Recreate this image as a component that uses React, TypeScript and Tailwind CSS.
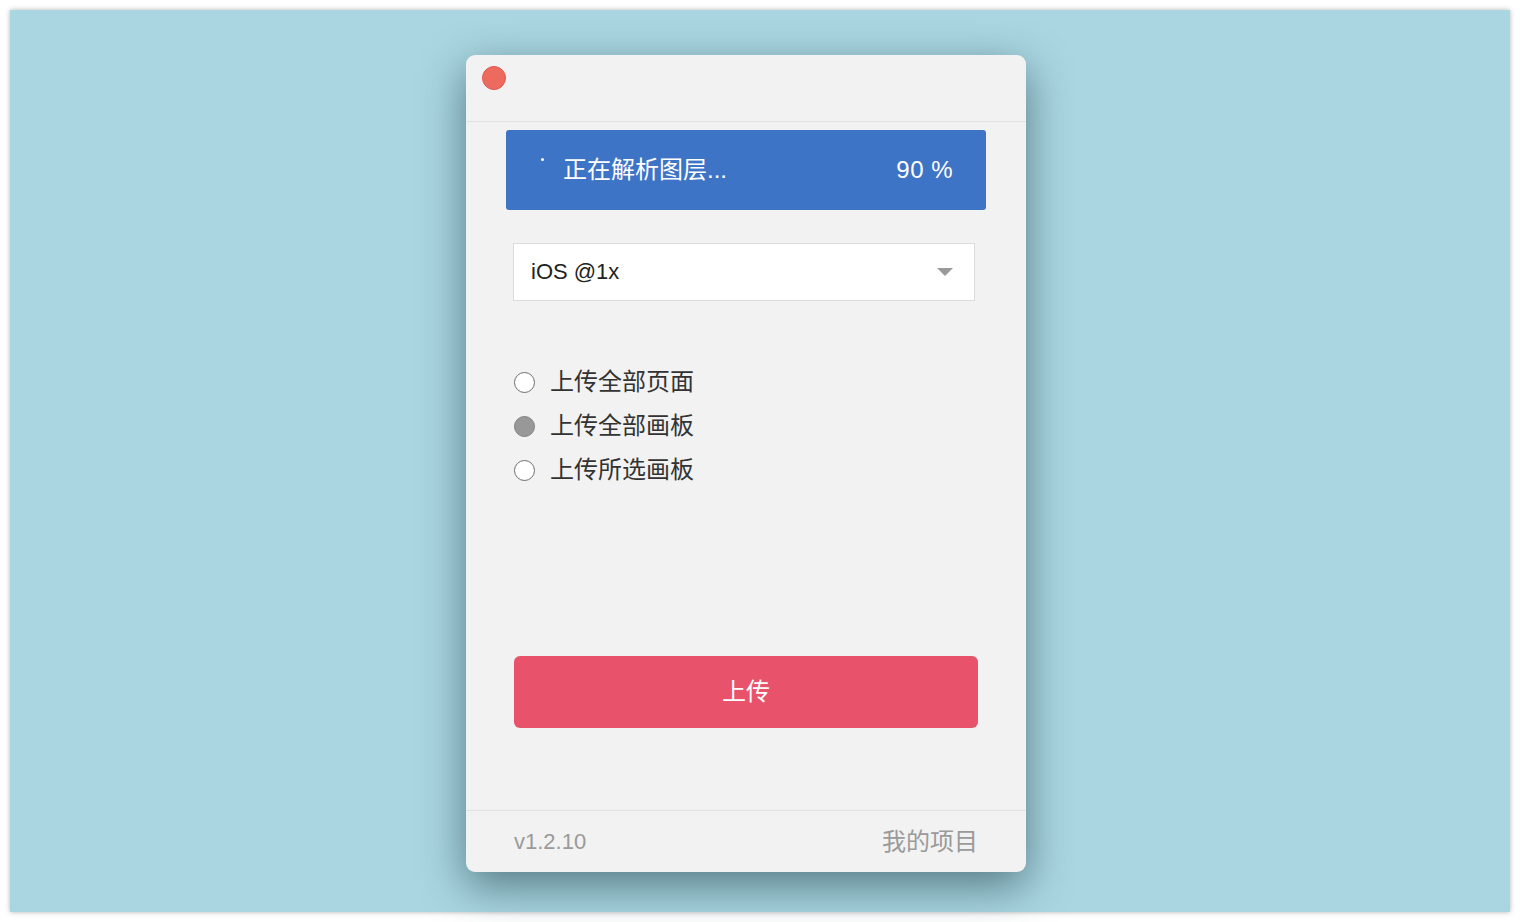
import React from 'react';

const font = { fontFamily: '"Liberation Sans", "Noto Sans CJK SC", sans-serif' };

const options = [
  { label: '上传全部页面', checked: false },
  { label: '上传全部画板', checked: true },
  { label: '上传所选画板', checked: false },
];

const App: React.FC = () => {
  return (
    <div className="w-[1520px] h-[922px] bg-white p-[10px]" style={font}>
      <div className="w-full h-full bg-[#a9d6e1] shadow-[0_0_5px_rgba(0,0,0,0.3)] pl-[456px] pt-[45px]">
        {/* Window */}
        <div className="w-[560px] h-[817px] bg-[#f2f2f2] rounded-[9px] flex flex-col shadow-[0_14px_44px_rgba(30,60,70,0.6)] overflow-hidden">
          {/* Title bar */}
          <div className="h-[67px] border-b border-[#e2e2e2] flex items-start pl-[16px] pt-[11px] shrink-0">
            <div className="w-[24px] h-[24px] rounded-full bg-[#ed6a5e] border border-[#e0584c]" />
          </div>

          {/* Content */}
          <div className="flex-1 flex flex-col">
            {/* Progress */}
            <div className="mx-[40px] mt-[8px] h-[80px] bg-[#3e74c6] rounded-[3px] flex items-center pl-[35px] pr-[33px] text-white">
              <div className="w-[3px] h-[3px] rounded-full bg-white -mt-[22px]" />
              <span className="ml-[19px] text-[24px] leading-none flex-1">正在解析图层...</span>
              <span className="text-[24px] leading-none tracking-[0.5px]">90 %</span>
            </div>

            {/* Select */}
            <div className="ml-[47px] mr-[51px] mt-[33px] h-[58px] bg-white border border-[#dcdcdc] flex items-center pl-[17px] pr-[21px]">
              <span className="text-[22px] text-[#222] flex-1 leading-none">iOS @1x</span>
              <svg width="16" height="8" viewBox="0 0 16 8">
                <path d="M0 0 H16 L8 8 Z" fill="#9a9a9a" />
              </svg>
            </div>

            {/* Radio options */}
            <div className="ml-[48px] mt-[59px] flex flex-col">
              {options.map((o) => (
                <div key={o.label} className="h-[44px] flex items-center">
                  <div
                    className={
                      o.checked
                        ? 'w-[21px] h-[21px] rounded-full bg-[#989898] border-[1.5px] border-[#808080]'
                        : 'w-[21px] h-[21px] rounded-full bg-white border-[1.5px] border-[#6e6e6e]'
                    }
                  />
                  <span className="ml-[15px] text-[24px] text-[#333] leading-none">{o.label}</span>
                </div>
              ))}
            </div>

            {/* Upload button */}
            <div className="ml-[48px] mr-[48px] mt-[164px] h-[72px] bg-[#e8536b] rounded-[6px] flex items-center justify-center">
              <span className="text-[24px] text-white leading-none">上传</span>
            </div>
          </div>

          {/* Footer */}
          <div className="h-[62px] border-t border-[#e2e2e2] flex items-center justify-between px-[48px] shrink-0">
            <span className="text-[22px] text-[#9a9a9a] leading-none">v1.2.10</span>
            <span className="text-[24px] text-[#9a9a9a] leading-none">我的项目</span>
          </div>
        </div>
      </div>
    </div>
  );
};

export default App;
